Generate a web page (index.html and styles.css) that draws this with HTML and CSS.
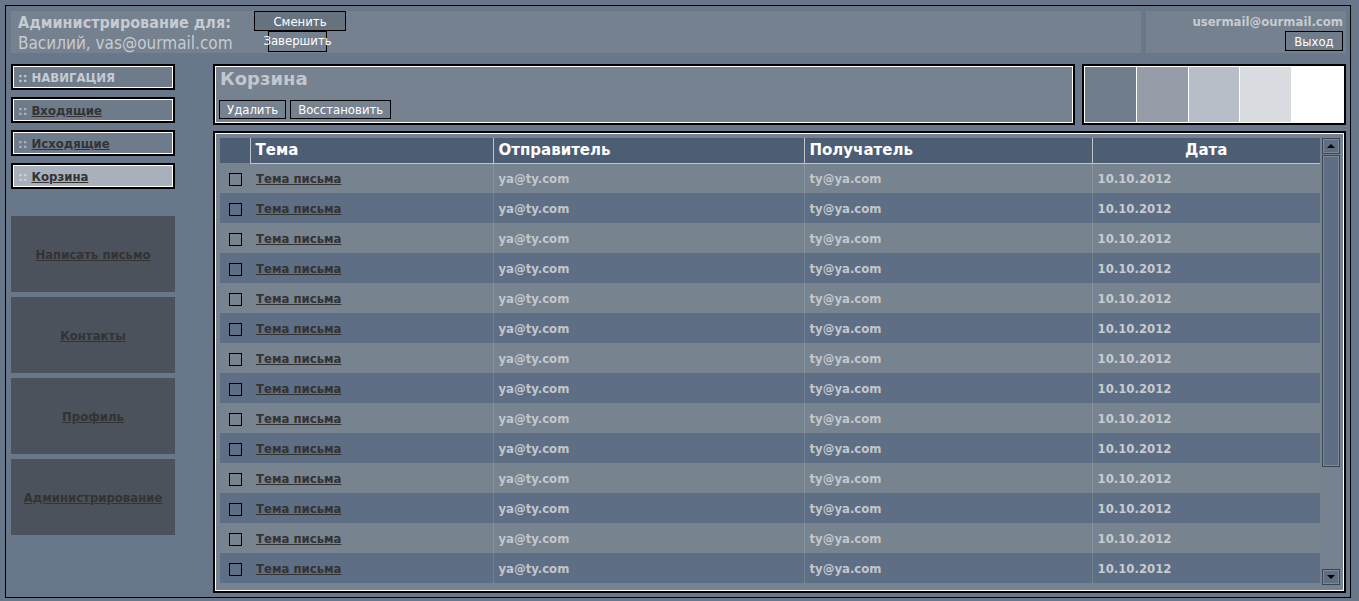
FILE: index.html
```html
<!DOCTYPE html>
<html lang="ru">
<head>
<meta charset="utf-8">
<title>Корзина</title>
<link rel="stylesheet" href="styles.css">
</head>
<body>
<div class="page">
  <header class="top">
    <div class="top-left">
      <div class="admin-info">
        <div class="admin-title">Администрирование для:</div>
        <div class="admin-user">Василий, vas@ourmail.com</div>
      </div>
      <div class="admin-actions">
        <button class="btn btn-change">Сменить</button>
        <button class="btn btn-finish">Завершить</button>
      </div>
    </div>
    <div class="top-right">
      <div class="user-mail">usermail@ourmail.com</div>
      <button class="btn btn-exit">Выход</button>
    </div>
  </header>

  <div class="main">
    <aside class="side">
      <nav class="nav">
        <div class="nav-item nav-head"><span class="dots">::</span> НАВИГАЦИЯ</div>
        <div class="nav-item"><span class="dots">::</span> <a href="#">Входящие</a></div>
        <div class="nav-item"><span class="dots">::</span> <a href="#">Исходящие</a></div>
        <div class="nav-item active"><span class="dots">::</span> <a href="#">Корзина</a></div>
      </nav>
      <div class="tiles">
        <a class="tile" href="#">Написать письмо</a>
        <a class="tile" href="#">Контакты</a>
        <a class="tile" href="#">Профиль</a>
        <a class="tile" href="#">Администрирование</a>
      </div>
    </aside>

    <section class="content">
      <div class="content-top">
        <div class="title-panel">
          <h1 class="title">Корзина</h1>
          <div class="actions">
            <button class="btn btn-action">Удалить</button>
            <button class="btn btn-action">Восстановить</button>
          </div>
        </div>
        <div class="palette">
          <div class="sw sw1"></div>
          <div class="sw sw2"></div>
          <div class="sw sw3"></div>
          <div class="sw sw4"></div>
          <div class="sw sw5"></div>
        </div>
      </div>

      <div class="table-panel">
        <div class="table-wrap">
          <table class="mail">
            <colgroup>
              <col class="c-check"><col class="c-subj"><col class="c-from"><col class="c-to"><col class="c-date">
            </colgroup>
            <thead>
              <tr>
                <th class="h-check"></th>
                <th>Тема</th>
                <th>Отправитель</th>
                <th>Получатель</th>
                <th class="h-date">Дата</th>
              </tr>
            </thead>
            <tbody>
              <tr><td class="cb"><span class="box"></span></td><td class="subj"><a href="#">Тема письма</a></td><td class="sep">ya@ty.com</td><td class="sep">ty@ya.com</td><td class="sep date">10.10.2012</td></tr>
              <tr><td class="cb"><span class="box"></span></td><td class="subj"><a href="#">Тема письма</a></td><td class="sep">ya@ty.com</td><td class="sep">ty@ya.com</td><td class="sep date">10.10.2012</td></tr>
              <tr><td class="cb"><span class="box"></span></td><td class="subj"><a href="#">Тема письма</a></td><td class="sep">ya@ty.com</td><td class="sep">ty@ya.com</td><td class="sep date">10.10.2012</td></tr>
              <tr><td class="cb"><span class="box"></span></td><td class="subj"><a href="#">Тема письма</a></td><td class="sep">ya@ty.com</td><td class="sep">ty@ya.com</td><td class="sep date">10.10.2012</td></tr>
              <tr><td class="cb"><span class="box"></span></td><td class="subj"><a href="#">Тема письма</a></td><td class="sep">ya@ty.com</td><td class="sep">ty@ya.com</td><td class="sep date">10.10.2012</td></tr>
              <tr><td class="cb"><span class="box"></span></td><td class="subj"><a href="#">Тема письма</a></td><td class="sep">ya@ty.com</td><td class="sep">ty@ya.com</td><td class="sep date">10.10.2012</td></tr>
              <tr><td class="cb"><span class="box"></span></td><td class="subj"><a href="#">Тема письма</a></td><td class="sep">ya@ty.com</td><td class="sep">ty@ya.com</td><td class="sep date">10.10.2012</td></tr>
              <tr><td class="cb"><span class="box"></span></td><td class="subj"><a href="#">Тема письма</a></td><td class="sep">ya@ty.com</td><td class="sep">ty@ya.com</td><td class="sep date">10.10.2012</td></tr>
              <tr><td class="cb"><span class="box"></span></td><td class="subj"><a href="#">Тема письма</a></td><td class="sep">ya@ty.com</td><td class="sep">ty@ya.com</td><td class="sep date">10.10.2012</td></tr>
              <tr><td class="cb"><span class="box"></span></td><td class="subj"><a href="#">Тема письма</a></td><td class="sep">ya@ty.com</td><td class="sep">ty@ya.com</td><td class="sep date">10.10.2012</td></tr>
              <tr><td class="cb"><span class="box"></span></td><td class="subj"><a href="#">Тема письма</a></td><td class="sep">ya@ty.com</td><td class="sep">ty@ya.com</td><td class="sep date">10.10.2012</td></tr>
              <tr><td class="cb"><span class="box"></span></td><td class="subj"><a href="#">Тема письма</a></td><td class="sep">ya@ty.com</td><td class="sep">ty@ya.com</td><td class="sep date">10.10.2012</td></tr>
              <tr><td class="cb"><span class="box"></span></td><td class="subj"><a href="#">Тема письма</a></td><td class="sep">ya@ty.com</td><td class="sep">ty@ya.com</td><td class="sep date">10.10.2012</td></tr>
              <tr><td class="cb"><span class="box"></span></td><td class="subj"><a href="#">Тема письма</a></td><td class="sep">ya@ty.com</td><td class="sep">ty@ya.com</td><td class="sep date">10.10.2012</td></tr>
            </tbody>
          </table>
        </div>
        <div class="scrollbar">
          <div class="sb-btn sb-up"><span class="tri-up"></span></div>
          <div class="sb-thumb"></div>
          <div class="sb-track"></div>
          <div class="sb-btn sb-down"><span class="tri-down"></span></div>
        </div>
      </div>
    </section>
  </div>
</div>
</body>
</html>
```

FILE: styles.css
```css
* { box-sizing: border-box; }

html, body {
  margin: 0;
  padding: 0;
  background: #68778a;
  font-family: "DejaVu Sans Condensed", "DejaVu Sans", sans-serif;
}

.page {
  margin: 5px 0 0 5px;
  width: 1346px;
  height: 593px;
  border: 1px solid #000;
  padding: 5px 4px 4px 5px;
  display: flex;
  flex-direction: column;
}

/* ---------- header ---------- */
.top {
  display: flex;
  gap: 5px;
  height: 42px;
  flex: none;
}

.top-left {
  flex: 1;
  display: flex;
  background: #76818f;
}

.admin-info {
  width: 243px;
  padding: 2px 0 0 7px;
}

.admin-title {
  font-family: "DejaVu Sans Condensed", "DejaVu Sans", sans-serif;
  font-weight: bold;
  font-size: 16px;
  line-height: 20px;
  color: #c6cbd1;
  white-space: nowrap;
}

.admin-user {
  font-family: "DejaVu Sans Condensed", "DejaVu Sans", sans-serif;
  font-size: 17px;
  line-height: 20px;
  color: #c6cbd1;
  white-space: nowrap;
}

.admin-actions {
  display: flex;
  flex-direction: column;
  align-items: flex-start;
}

.btn {
  font-family: "DejaVu Sans Condensed", "DejaVu Sans", sans-serif;
  font-size: 13px;
  color: #fff;
  border: 1px solid #000;
  background: transparent;
  padding: 0;
  margin: 0;
  line-height: 17px;
  text-align: center;
  white-space: nowrap;
  cursor: pointer;
}

.btn-change {
  width: 92px;
  height: 20px;
  background: #67727f;
}

.btn-finish {
  width: 59px;
  height: 21px;
  margin-left: 14px;
  display: flex;
  justify-content: center;
  overflow: visible;
}

.top-right {
  width: 200px;
  background: #76818f;
  display: flex;
  flex-direction: column;
  align-items: flex-end;
  padding: 3px 3px 0 0;
}

.user-mail {
  font-weight: bold;
  font-size: 13px;
  line-height: 16px;
  color: #c6cbd1;
}

.btn-exit {
  margin-top: 1px;
  width: 58px;
  height: 20px;
  background: #707c8a;
}

/* ---------- main ---------- */
.main {
  flex: 1;
  display: flex;
  gap: 38px;
  margin-top: 11px;
  min-height: 0;
}

.side {
  width: 164px;
  flex: none;
}

.nav {
  display: flex;
  flex-direction: column;
  gap: 7px;
}

.nav-item {
  height: 26px;
  border: 2px solid #000;
  box-shadow: inset 0 0 0 1px #fff;
  background: #6e7b8b;
  padding: 1px 0 0 5px;
  font-weight: bold;
  font-size: 13px;
  line-height: 21px;
  color: #c6cbd1;
  white-space: nowrap;
}

.nav-item .dots {
  color: #aeb6c0;
}

.nav-head .dots { color: #c6cbd1; }

.nav-item a {
  color: #333;
  text-decoration: underline;
}

.nav-item.active {
  background: #a8b0bb;
}

.nav-item.active .dots {
  color: #cdd2d8;
}

.tiles {
  margin-top: 27px;
  display: flex;
  flex-direction: column;
  gap: 5px;
}

.tile {
  height: 76px;
  background: #4b525c;
  display: flex;
  align-items: center;
  justify-content: center;
  font-weight: bold;
  font-size: 13px;
  color: #333;
  text-decoration: underline;
}

/* ---------- content ---------- */
.content {
  flex: 1;
  display: flex;
  flex-direction: column;
  gap: 6px;
  min-width: 0;
  min-height: 0;
}

.content-top {
  display: flex;
  gap: 7px;
  height: 61px;
  flex: none;
}

.title-panel {
  flex: 1;
  border: 2px solid #000;
  box-shadow: inset 0 0 0 1px #fff;
  background: #76828f;
  padding: 2px 0 0 5px;
}

.title {
  margin: 0;
  font-family: "DejaVu Sans", sans-serif;
  font-weight: bold;
  font-size: 18px;
  line-height: 21px;
  color: #c3c7cd;
}

.actions {
  margin-top: 11px;
  display: flex;
  gap: 4px;
  margin-left: -1px;
}

.btn-action {
  height: 19px;
  padding: 0 7px;
  line-height: 17px;
}

.palette {
  width: 264px;
  border: 2px solid #000;
  display: flex;
  background: #fff;
  padding: 1px;
  gap: 1px;
}

.sw { flex: 1; }
.sw1 { background: #6f7c8c; }
.sw2 { background: #969da8; }
.sw3 { background: #b8bec7; }
.sw4 { background: #d8dbdf; }
.sw5 { background: #fff; }

.table-panel {
  flex: 1;
  min-height: 0;
  border: 2px solid #000;
  box-shadow: inset 0 0 0 1px #fff;
  background: #76828f;
  padding: 5px 4px 5px 5px;
  display: flex;
  gap: 2px;
}

.table-wrap {
  width: 1100px;
  overflow: hidden;
}

.mail {
  width: 1100px;
  border-collapse: collapse;
  table-layout: fixed;
}

.c-check { width: 30px; }
.c-subj { width: 243px; }
.c-from { width: 311px; }
.c-to { width: 288px; }
.c-date { width: 228px; }

.mail thead th {
  background: #4d5d73;
  height: 25px;
  padding: 0 0 0 5px;
  text-align: left;
  font-family: "DejaVu Sans", sans-serif;
  font-weight: bold;
  font-size: 15px;
  line-height: 18px;
  color: #fff;
  border-left: 1px solid #c0c4ca;
  border-bottom: 1px solid #c0c4ca;
}

.mail thead th.h-check {
  border-left: none;
  border-bottom: none;
}

.mail thead th.h-date {
  text-align: center;
  padding-left: 0;
}

.mail tbody tr {
  height: 30px;
}

.mail tbody tr:nth-child(odd) { background: #77838f; }
.mail tbody tr:nth-child(even) { background: #5e6e84; }

.mail td {
  padding: 1px 0 0 5px;
  font-weight: bold;
  font-size: 13px;
  color: #c3c7cd;
  white-space: nowrap;
}

.mail td.sep {
  border-left: 1px solid rgba(255, 255, 255, 0.12);
}

.mail td.cb {
  padding: 0;
  text-align: center;
}

.box {
  display: inline-block;
  width: 13px;
  height: 13px;
  border: 1px solid #000;
  vertical-align: middle;
  margin-left: 1px;
}

.mail td.subj {
  padding-left: 6px;
}

.mail td.subj a {
  color: #333;
  text-decoration: underline;
}

.mail td.date { color: #c8cbd0; }

/* ---------- scrollbar ---------- */
.scrollbar {
  width: 18px;
  flex: none;
  display: flex;
  flex-direction: column;
}

.sb-btn {
  height: 16px;
  flex: none;
  border: 1px solid #3c4450;
  box-shadow: inset 0 0 0 1px #7d8896;
  background: #5e6e84;
  display: flex;
  align-items: center;
  justify-content: center;
}

.sb-thumb {
  height: 312px;
  flex: none;
  margin-top: 1px;
  border: 1px solid #3c4450;
  box-shadow: inset 0 0 0 1px #7d8896;
  background: #5e6e84;
}

.sb-track { flex: 1; }

.sb-down { margin-bottom: 1px; }

.tri-up {
  width: 0; height: 0;
  border-left: 4px solid transparent;
  border-right: 4px solid transparent;
  border-bottom: 4px solid #000;
}

.tri-down {
  width: 0; height: 0;
  border-left: 4px solid transparent;
  border-right: 4px solid transparent;
  border-top: 4px solid #000;
}
```
